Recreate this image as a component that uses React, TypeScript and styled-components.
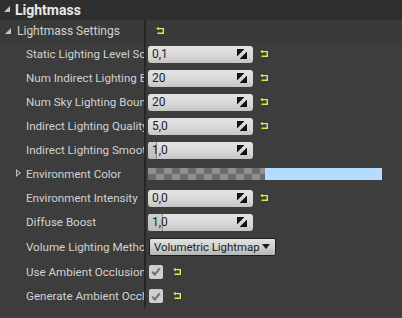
import React from "react";
import styled, { createGlobalStyle } from "styled-components";

const GlobalStyle = createGlobalStyle`
  html, body {
    margin: 0;
    padding: 0;
    background: #3d3d3d;
  }
  body {
    font-family: Roboto, "Noto Sans", sans-serif;
  }
`;

type Field =
  | { kind: "number"; label: string; value: string; reset?: boolean; fill?: number }
  | { kind: "color"; label: string }
  | { kind: "combo"; label: string; value: string }
  | { kind: "check"; label: string };

const fields: Field[] = [
  { kind: "number", label: "Static Lighting Level Scale", value: "0,1", reset: true },
  { kind: "number", label: "Num Indirect Lighting Bounces", value: "20", reset: true },
  { kind: "number", label: "Num Sky Lighting Bounces", value: "20", reset: true },
  { kind: "number", label: "Indirect Lighting Quality", value: "5,0", reset: true },
  { kind: "number", label: "Indirect Lighting Smoothness", value: "1,0", fill: 8 },
  { kind: "color", label: "Environment Color" },
  { kind: "number", label: "Environment Intensity", value: "0,0", reset: true },
  { kind: "number", label: "Diffuse Boost", value: "1,0", fill: 14 },
  { kind: "combo", label: "Volume Lighting Method", value: "Volumetric Lightmap" },
  { kind: "check", label: "Use Ambient Occlusion" },
  { kind: "check", label: "Generate Ambient Occlusion Material Mask" },
];

const ResetIcon = () => (
  <svg width="9" height="8" viewBox="0 0 9 8">
    <polygon points="0,1.6 3,0 3,3.2" fill="#e4e456" />
    <path d="M2.5 1.6 H7.3 V6.2 H1.5" fill="none" stroke="#e4e456" strokeWidth="1.4" />
  </svg>
);

const SpinIcon = () => (
  <svg width="10" height="10" viewBox="0 0 10 10">
    <polygon points="0,0 7.5,0 0,7.5" fill="#101010" />
    <polygon points="10,2.5 10,10 2.5,10" fill="#101010" />
  </svg>
);

const CheckIcon = () => (
  <svg width="10" height="9" viewBox="0 0 10 9">
    <path d="M1.2 4.8 L3.8 7.4 L8.8 1.4" fill="none" stroke="#6e6e6e" strokeWidth="2" />
  </svg>
);

export default function App() {
  return (
    <>
      <GlobalStyle />
      <Panel>
        <Header>
          <ExpandedArrow />
          <HeaderTitle>Lightmass</HeaderTitle>
        </Header>
        <List>
          <CategoryRow>
            <CategoryLabel>
              <ExpandedArrow />
              <span>Lightmass Settings</span>
            </CategoryLabel>
            <CategoryValue>
              <ResetIcon />
            </CategoryValue>
          </CategoryRow>
          {fields.map((f) => (
            <Row key={f.label} tall={f.kind === "combo" || f.label === "Use Ambient Occlusion"}>
              <Label>
                {f.kind === "color" && <CollapsedArrow />}
                <LabelText>{f.label}</LabelText>
              </Label>
              <Value>
                {f.kind === "number" && (
                  <>
                    <NumberBox>
                      {f.fill !== undefined && <SliderFill style={{ width: f.fill }} />}
                      <NumberText>{f.value}</NumberText>
                      <SpinIcon />
                    </NumberBox>
                    {f.reset && (
                      <ResetSlot gap={7}>
                        <ResetIcon />
                      </ResetSlot>
                    )}
                  </>
                )}
                {f.kind === "color" && (
                  <ColorBar>
                    <Checker />
                    <ColorSwatch />
                  </ColorBar>
                )}
                {f.kind === "combo" && (
                  <Combo>
                    <ComboText>{f.value}</ComboText>
                    <ComboArrow />
                  </Combo>
                )}
                {f.kind === "check" && (
                  <>
                    <CheckBox>
                      <CheckIcon />
                    </CheckBox>
                    <ResetSlot gap={10}>
                      <ResetIcon />
                    </ResetSlot>
                  </>
                )}
              </Value>
            </Row>
          ))}
        </List>
      </Panel>
    </>
  );
}

const Panel = styled.div`
  width: 402px;
  height: 318px;
  background: #3d3d3d;
  overflow: hidden;
`;

const Header = styled.div`
  height: 20px;
  display: flex;
  align-items: center;
  padding-left: 4px;
  background: #2f2f2f;
`;

const HeaderTitle = styled.div`
  margin-left: 5px;
  color: #e8e8e8;
  font-weight: 700;
  font-size: 14px;
`;

const ExpandedArrow = styled.div`
  width: 0;
  height: 0;
  border-left: 6px solid transparent;
  border-bottom: 6px solid #c4c4c4;
  margin-top: -2px;
`;

const CollapsedArrow = styled.div`
  position: absolute;
  left: 16px;
  top: 7px;
  width: 5px;
  height: 8px;
  &::before {
    content: "";
    position: absolute;
    inset: 0;
    background: #bdbdbd;
    clip-path: polygon(0 0, 100% 50%, 0 100%, 0 0, 1.2px 2px, 1.2px 6px, 3.4px 4px, 1.2px 2px);
  }
`;

const List = styled.div`
  display: flex;
  flex-direction: column;
`;

const CategoryRow = styled.div`
  height: 22px;
  display: grid;
  grid-template-columns: 144px 1fr;
  background: #3a3a3a;
`;

const CategoryLabel = styled.div`
  display: flex;
  align-items: center;
  gap: 6px;
  padding-left: 5px;
  color: #d2d2d2;
  font-size: 12px;
  & > div {
    margin-top: 0;
  }
`;

const CategoryValue = styled.div`
  display: flex;
  align-items: center;
  padding-left: 10px;
  border-left: 2px solid #262626;
`;

const Row = styled.div<{ tall?: boolean }>`
  height: ${({ tall }) => (tall ? 25 : 24)}px;
  display: grid;
  grid-template-columns: 144px 1fr;
`;

const Label = styled.div`
  position: relative;
  display: flex;
  align-items: center;
  padding-left: 26px;
  overflow: hidden;
  min-width: 0;
`;

const LabelText = styled.span`
  display: block;
  min-width: 0;
  overflow: hidden;
  white-space: nowrap;
  text-overflow: clip;
  color: #d2d2d2;
  font-size: 11.6px;
`;

const Value = styled.div`
  display: flex;
  align-items: center;
  padding-left: 2px;
  border-left: 2px solid #262626;
`;

const NumberBox = styled.div`
  position: relative;
  width: 105px;
  height: 17px;
  box-sizing: border-box;
  display: flex;
  align-items: center;
  justify-content: space-between;
  padding: 0 6px 0 4px;
  border-radius: 3px;
  background: linear-gradient(#e4e4e4, #d6d6d6 60%, #c6c6c6);
  overflow: hidden;
`;

const SliderFill = styled.div`
  position: absolute;
  left: 0;
  top: 0;
  bottom: 0;
  background: linear-gradient(#cfcfcf, #bdbdbd);
  border-right: 1px solid #8a8a8a;
`;

const NumberText = styled.span`
  position: relative;
  color: #1e1e1e;
  font-size: 12px;
`;

const ResetSlot = styled.div<{ gap: number }>`
  display: flex;
  margin-left: ${({ gap }) => gap}px;
`;

const ColorBar = styled.div`
  width: 234px;
  height: 12px;
  display: flex;
`;

const Checker = styled.div`
  width: 117px;
  background-color: #6c6c6c;
  background-image: linear-gradient(90deg, #8e8e8e 50%, transparent 50%),
    linear-gradient(90deg, transparent 50%, #8e8e8e 50%);
  background-size: 16px 6px, 16px 6px;
  background-position: 0 0, 0 6px;
  background-repeat: repeat-x;
`;

const ColorSwatch = styled.div`
  flex: 1;
  background: #b3dcff;
`;

const Combo = styled.div`
  width: 127px;
  height: 18px;
  box-sizing: border-box;
  margin-left: 1px;
  display: flex;
  align-items: center;
  gap: 2px;
  padding: 0 4px 0 4px;
  border: 1px solid #1e1e1e;
  border-radius: 2px;
  background: linear-gradient(#e2e2e2, #cdcdcd 55%, #b4b4b4);
  color: #1a1a1a;
`;

const ComboText = styled.span`
  white-space: nowrap;
  font-size: 11.4px;
`;

const ComboArrow = styled.div`
  flex-shrink: 0;
  width: 0;
  height: 0;
  border-left: 4.5px solid transparent;
  border-right: 4.5px solid transparent;
  border-top: 5px solid #1a1a1a;
`;

const CheckBox = styled.div`
  width: 14px;
  height: 14px;
  margin-left: 1px;
  border-radius: 2px;
  background: #cfcfcf;
  display: flex;
  align-items: center;
  justify-content: center;
`;
